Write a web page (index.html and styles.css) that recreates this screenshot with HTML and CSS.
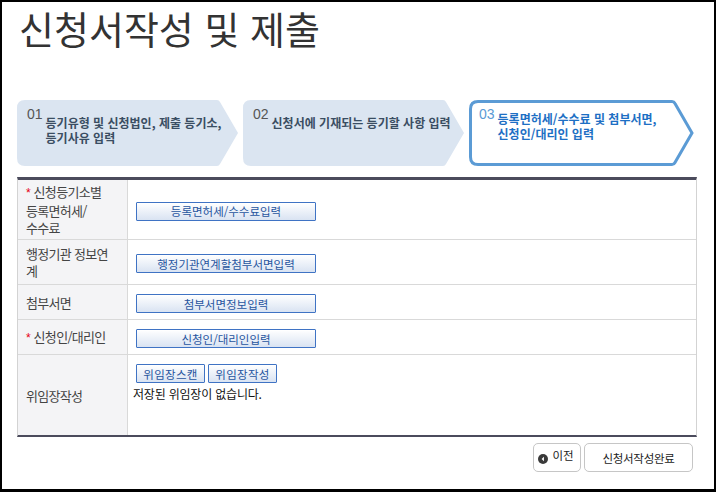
FILE: index.html
```html
<!DOCTYPE html>
<html lang="ko">
<head>
<meta charset="utf-8">
<title>신청서작성 및 제출</title>
<link rel="stylesheet" href="styles.css">
</head>
<body>
<div class="page">
  <h1 class="title">신청서작성 및 제출</h1>

  <ol class="steps">
    <li class="step">
      <svg class="step-shape" viewBox="0 0 221 66" preserveAspectRatio="none" aria-hidden="true"><path d="M8 0H200Q202 0 203 2L221 33L203 64Q202 66 200 66H8Q0 66 0 58V8Q0 0 8 0Z"/></svg>
      <span class="step-num">01</span>
      <span class="step-text">등기유형 및 신청법인, 제출 등기소, 등기사유 입력</span>
    </li>
    <li class="step">
      <svg class="step-shape" viewBox="0 0 221 66" preserveAspectRatio="none" aria-hidden="true"><path d="M8 0H200Q202 0 203 2L221 33L203 64Q202 66 200 66H8Q0 66 0 58V8Q0 0 8 0Z"/></svg>
      <span class="step-num">02</span>
      <span class="step-text">신청서에 기재되는 등기할 사항 입력</span>
    </li>
    <li class="step step-active">
      <svg class="step-shape" viewBox="0 0 225 66" preserveAspectRatio="none" aria-hidden="true"><path d="M9 1.5H203Q205 1.5 206 3.5L223 33L206 62.5Q205 64.5 203 64.5H9Q1.5 64.5 1.5 57V9Q1.5 1.5 9 1.5Z"/></svg>
      <span class="step-num">03</span>
      <span class="step-text">등록면허세/수수료 및 첨부서면, 신청인/대리인 입력</span>
    </li>
  </ol>

  <div class="form">
    <div class="row row-fee">
      <div class="label"><span><span class="req">*</span> 신청등기소별<br>등록면허세/<br>수수료</span></div>
      <div class="value"><button class="btn btn-wide" type="button">등록면허세/수수료입력</button></div>
    </div>
    <div class="row row-link">
      <div class="label"><span>행정기관 정보연<br>계</span></div>
      <div class="value"><button class="btn btn-wide" type="button">행정기관연계할첨부서면입력</button></div>
    </div>
    <div class="row row-short">
      <div class="label"><span>첨부서면</span></div>
      <div class="value"><button class="btn btn-wide" type="button">첨부서면정보입력</button></div>
    </div>
    <div class="row row-short">
      <div class="label"><span><span class="req">*</span> 신청인/대리인</span></div>
      <div class="value"><button class="btn btn-wide" type="button">신청인/대리인입력</button></div>
    </div>
    <div class="row row-proxy">
      <div class="label"><span>위임장작성</span></div>
      <div class="value value-top">
        <div class="btn-group">
          <button class="btn btn-small" type="button">위임장스캔</button>
          <button class="btn btn-small" type="button">위임장작성</button>
        </div>
        <p class="note">저장된 위임장이 없습니다.</p>
      </div>
    </div>
  </div>

  <div class="actions">
    <button class="action" type="button">
      <svg class="prev-icon" viewBox="0 0 11 11" aria-hidden="true"><circle cx="5.5" cy="5.5" r="5.5" fill="#3a3a3a"/><path d="M6.5 3L4 5.5L6.5 8Z" fill="#fff"/></svg>
      <span class="prev-label">이전</span>
    </button>
    <button class="action action-done" type="button">신청서작성완료</button>
  </div>
</div>
</body>
</html>
```

FILE: styles.css
```css
* { box-sizing: border-box; }

html, body {
  margin: 0;
  padding: 0;
  background: #fff;
}

body {
  font-family: "Noto Sans CJK KR", "Noto Sans", sans-serif;
  color: #333;
}

.page {
  height: 492px;
  border: 2px solid #000;
  border-bottom-width: 3px;
  padding: 0 17px 0 15px;
  overflow: hidden;
}

.title {
  margin: 3px 0 0 2px;
  font-size: 38px;
  line-height: 46px;
  font-weight: 400;
  color: #333;
  letter-spacing: 0;
}

/* steps */
.steps {
  list-style: none;
  margin: 49px 0 0 0;
  padding: 0;
  display: flex;
  gap: 5px;
}

.step {
  position: relative;
  flex: 0 0 221px;
  height: 66px;
  display: flex;
  align-items: flex-start;
  padding: 7px 6px 0 10px;
}

.step-active { flex-basis: 225px; }

.step-shape {
  position: absolute;
  inset: 0;
  width: 100%;
  height: 100%;
  z-index: 0;
}

.step-shape path { fill: #dbe5f1; }

.step-active .step-shape path {
  fill: #fff;
  stroke: #5b9bd5;
  stroke-width: 3;
}

.step-num {
  position: relative;
  font-family: "Liberation Sans", Arial, sans-serif;
  font-size: 14px;
  line-height: 15px;
  color: #555;
  margin-right: 3px;
  flex: none;
}

.step-text {
  position: relative;
  margin-top: 8px;
  font-size: 12px;
  line-height: 15px;
  font-weight: 700;
  color: #3a4d62;
  word-break: keep-all;
}

.step-active .step-num { color: #5b9bd5; }
.step-active .step-text { color: #1d6fc4; margin-top: 4px; }

/* form */
.form {
  margin-top: 11px;
  border-top: 3px solid #4b4b5c;
  border-bottom: 2px solid #4b4b5c;
  border-left: 1px solid #d3d3d3;
  border-right: 1px solid #d3d3d3;
}

.row {
  display: grid;
  grid-template-columns: 110px 1fr;
  border-bottom: 1px solid #d9d9d9;
}

.row:last-child { border-bottom: 0; }

.row-fee { height: 60px; }
.row-link { height: 45px; }
.row-short { height: 35px; }
.row-proxy { height: 80px; }

.label {
  background: #f4f4f6;
  border-right: 1px solid #d9d9d9;
  display: flex;
  align-items: center;
  padding: 0 6px 0 8px;
  font-size: 13px;
  line-height: 17px;
  letter-spacing: -0.7px;
  color: #444;
}

.req {
  color: #e60012;
  font-family: "Liberation Sans", Arial, sans-serif;
  font-size: 12px;
  letter-spacing: 0;
}

.value {
  display: flex;
  align-items: center;
  padding: 3px 0 0 8px;
}

.value-top {
  flex-direction: column;
  align-items: flex-start;
  justify-content: flex-start;
  padding: 9px 0 0 8px;
}

.btn {
  height: 19px;
  padding: 0;
  border: 1px solid #3f73c4;
  border-radius: 1px;
  background: linear-gradient(#ffffff, #d9e3f2);
  box-shadow: inset 0 1px 0 #fff;
  font-family: "Noto Sans CJK KR", sans-serif;
  font-size: 11.5px;
  line-height: 16px;
  color: #27559f;
  cursor: pointer;
}

.btn-wide { width: 180px; }

.btn-small {
  width: 69px;
  letter-spacing: 0.3px;
}

.btn-group {
  display: flex;
  gap: 3px;
}

.note {
  margin: 3px 0 0 -3px;
  font-size: 12px;
  line-height: 16px;
  letter-spacing: -0.2px;
  color: #111;
}

/* actions */
.actions {
  display: flex;
  justify-content: flex-end;
  gap: 3px;
  margin: 6px 4px 0 0;
}

.action {
  height: 29px;
  border: 1px solid #c6c6c6;
  border-radius: 5px;
  background: #fff;
  font-family: "Noto Sans CJK KR", sans-serif;
  font-size: 11.5px;
  color: #222;
  padding: 0;
  display: flex;
  align-items: center;
  justify-content: center;
  cursor: pointer;
}

.action:first-child {
  width: 48px;
  gap: 4px;
  padding-right: 2px;
}

.prev-icon {
  width: 10px;
  height: 10px;
  margin-top: 2px;
}

.prev-label { margin-top: -6px; }

.action-done {
  width: 109px;
  letter-spacing: -0.3px;
}
```
